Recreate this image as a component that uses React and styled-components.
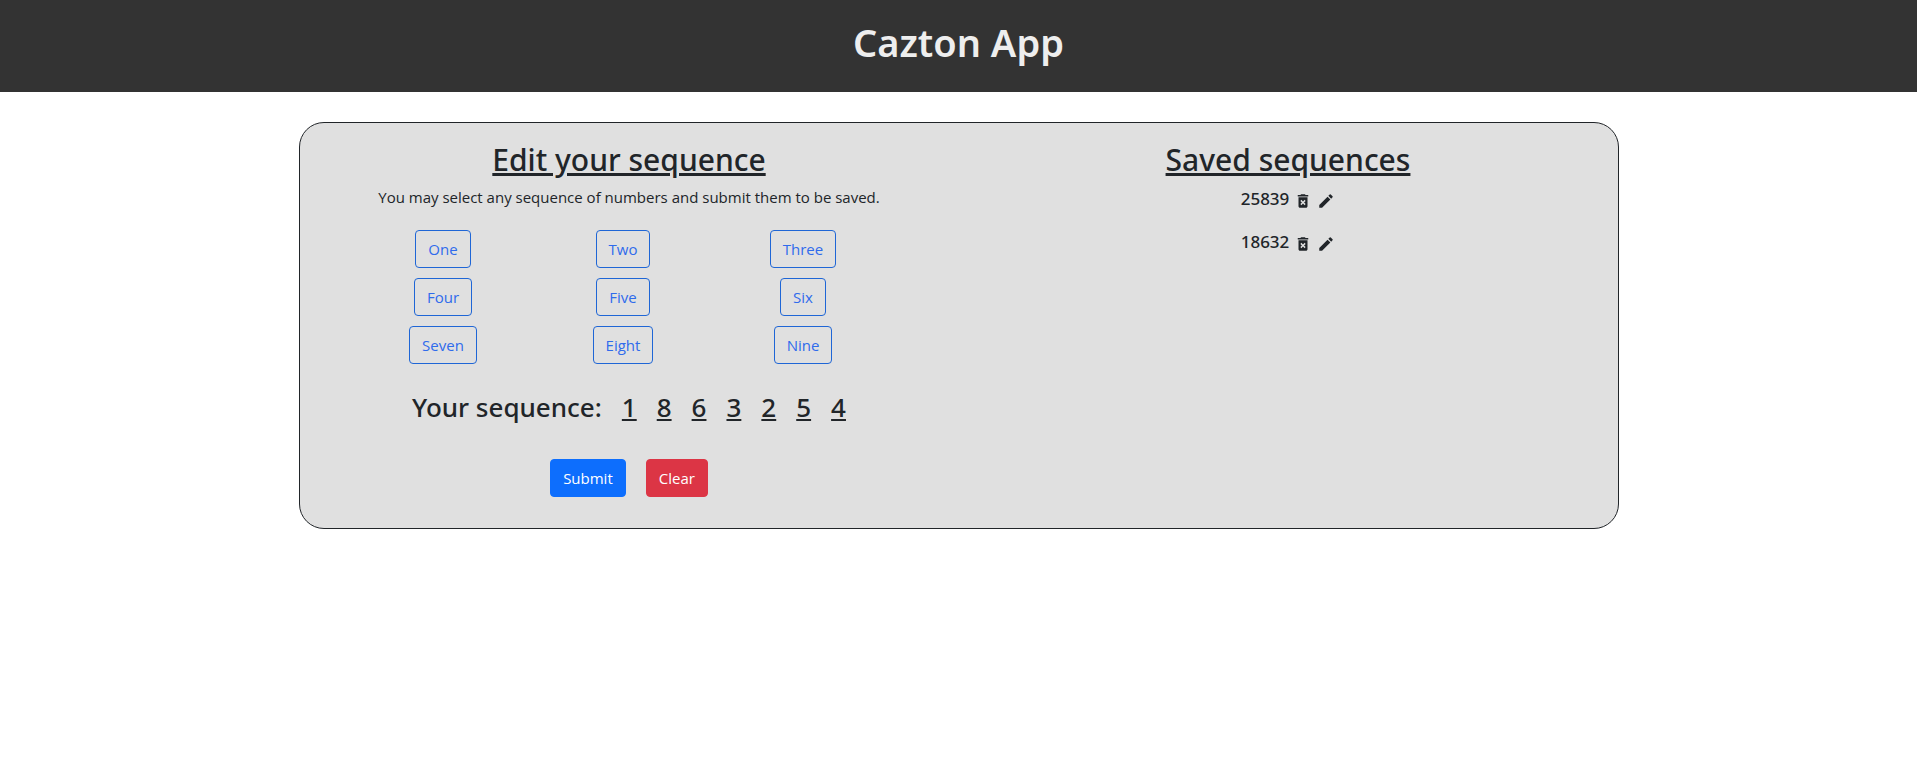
import React, { useState } from "react";
import styled, { createGlobalStyle } from "styled-components";
import { MdDeleteForever, MdEdit } from "react-icons/md";

const GlobalStyle = createGlobalStyle`
  *, *::before, *::after { box-sizing: border-box; }
  body {
    margin: 0;
    background: #fff;
    color: #212529;
    font-family: "Open Sans", "Noto Sans", sans-serif;
    font-size: 15px;
    line-height: 24px;
  }
`;

const headingFont = `"Noto Sans", "Open Sans", sans-serif`;

const Header = styled.header`
  padding: 18px 16px 26px;
  background: #333;
  color: #eee;
  text-align: center;
`;

const Title = styled.h1`
  margin: 0;
  font-family: ${headingFont};
  font-size: 38px;
  line-height: 48px;
  font-weight: 600;
`;

const Card = styled.main`
  display: grid;
  grid-template-columns: 1fr 1fr;
  max-width: 1320px;
  margin: 30px auto;
  padding: 17px 0 31px;
  background: #e0e0e0;
  border: 1px solid #212529;
  border-radius: 25px;
`;

const Column = styled.section`
  display: flex;
  flex-direction: column;
  align-items: center;
`;

const Heading = styled.h2`
  margin: 0 0 5px;
  font-family: ${headingFont};
  font-size: 30px;
  line-height: 40px;
  font-weight: 500;
  text-decoration: underline;
`;

const Intro = styled.p`
  margin: 0;
`;

const Keypad = styled.div`
  display: grid;
  grid-template-columns: repeat(3, 180px);
  gap: 10px 0;
  justify-items: center;
  margin: 21px 12px 0 0;
`;

const tones = {
  outline: { text: "#2f6bec", fill: "transparent", edge: "#1f66d6" },
  primary: { text: "#fff", fill: "#0d6efd", edge: "#0d6efd" },
  danger: { text: "#fff", fill: "#dc3545", edge: "#dc3545" },
};

const Button = styled.button`
  padding: 6px 12px;
  font: inherit;
  color: ${({ $tone }) => tones[$tone].text};
  background: ${({ $tone }) => tones[$tone].fill};
  border: 1px solid ${({ $tone }) => tones[$tone].edge};
  border-radius: 4px;
  cursor: pointer;
`;

const Sequence = styled.h3`
  display: flex;
  gap: 20px;
  margin: 26px 0 0;
  font-family: ${headingFont};
  font-size: 26px;
  line-height: 34px;
  font-weight: 500;
`;

const Digit = styled.span`
  text-decoration: underline;
`;

const Actions = styled.div`
  display: flex;
  gap: 20px;
  margin-top: 35px;
`;

const SavedList = styled.ul`
  display: grid;
  gap: 19px;
  justify-items: center;
  margin: 0;
  padding: 2px 0 0;
  list-style: none;
`;

const SavedItem = styled.li`
  display: flex;
  align-items: center;
  gap: 5px;
  font-family: ${headingFont};
  font-size: 17px;
  font-weight: 500;
`;

const IconButton = styled.button`
  display: flex;
  padding: 4px 0 0;
  color: inherit;
  font-size: 18px;
  background: none;
  border: 0;
  cursor: pointer;
`;

const names = ["One", "Two", "Three", "Four", "Five", "Six", "Seven", "Eight", "Nine"];

export default function App() {
  const [sequence, setSequence] = useState([1, 8, 6, 3, 2, 5, 4]);
  const [saved, setSaved] = useState(["25839", "18632"]);

  const remove = (index) => setSaved(saved.filter((_, i) => i !== index));
  const submit = () => {
    if (sequence.length === 0) return;
    setSaved([...saved, sequence.join("")]);
    setSequence([]);
  };

  return (
    <>
      <GlobalStyle />
      <Header>
        <Title>Cazton App</Title>
      </Header>
      <Card>
        <Column>
          <Heading>Edit your sequence</Heading>
          <Intro>You may select any sequence of numbers and submit them to be saved.</Intro>
          <Keypad>
            {names.map((name, i) => (
              <Button key={name} type="button" $tone="outline" onClick={() => setSequence([...sequence, i + 1])}>
                {name}
              </Button>
            ))}
          </Keypad>
          <Sequence>
            <span>Your sequence:</span>
            {sequence.map((digit, i) => (
              <Digit key={i}>{digit}</Digit>
            ))}
          </Sequence>
          <Actions>
            <Button type="button" $tone="primary" onClick={submit}>Submit</Button>
            <Button type="button" $tone="danger" onClick={() => setSequence([])}>Clear</Button>
          </Actions>
        </Column>
        <Column>
          <Heading>Saved sequences</Heading>
          <SavedList>
            {saved.map((entry, i) => (
              <SavedItem key={i}>
                <span>{entry}</span>
                <IconButton type="button" aria-label={`Delete ${entry}`} onClick={() => remove(i)}>
                  <MdDeleteForever />
                </IconButton>
                <IconButton type="button" aria-label={`Edit ${entry}`} onClick={() => setSequence([...entry].map(Number))}>
                  <MdEdit />
                </IconButton>
              </SavedItem>
            ))}
          </SavedList>
        </Column>
      </Card>
    </>
  );
}
